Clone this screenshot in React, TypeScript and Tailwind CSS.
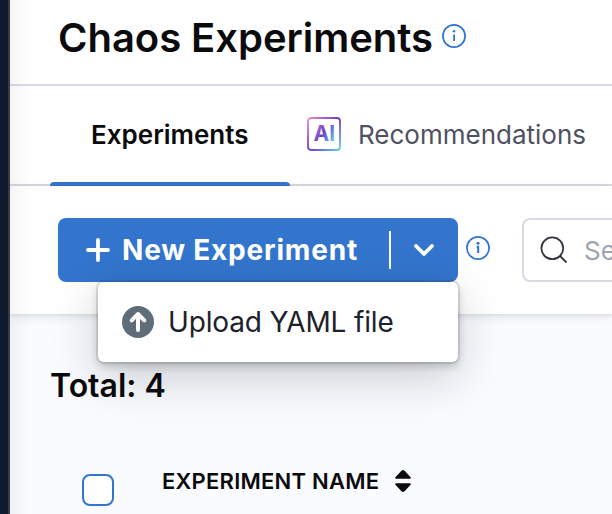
import React from "react";

function InfoIcon({ bold = false }: { bold?: boolean }) {
  return (
    <svg width="24" height="24" viewBox="0 0 24 24" fill="none" className="block shrink-0">
      <circle cx="12" cy="12" r="11.1" stroke="#2f74d0" strokeWidth="1.7" />
      <circle cx="12" cy="7.3" r={bold ? 1.5 : 1.2} fill="#2f74d0" />
      <path d={bold ? "M10.6 10.8H12.2V17" : "M11.2 11.5H12.1V17"} stroke="#2f74d0" strokeWidth={bold ? 2 : 1.8} />
    </svg>
  );
}

function AiBadge() {
  return (
    <svg width="34" height="34" viewBox="0 0 34 34" fill="none" className="block shrink-0">
      <defs>
        <linearGradient id="frame" x1="0" y1="0" x2="34" y2="34" gradientUnits="userSpaceOnUse">
          <stop offset="0.04" stopColor="#ee88c5" />
          <stop offset="0.5" stopColor="#6938d2" />
          <stop offset="0.96" stopColor="#62cde2" />
        </linearGradient>
        <linearGradient id="letters" x1="7" y1="8" x2="28" y2="21" gradientUnits="userSpaceOnUse">
          <stop offset="0" stopColor="#c273ca" />
          <stop offset="0.5" stopColor="#6840d4" />
          <stop offset="1" stopColor="#6cc6e4" />
        </linearGradient>
      </defs>
      <rect x="1" y="1" width="32" height="32" rx="3" stroke="url(#frame)" strokeWidth="1.8" />
      <text x="6.6" y="24" fill="url(#letters)" className="font-['Inter'] text-[21px] font-bold">AI</text>
    </svg>
  );
}

function SearchIcon() {
  return (
    <svg width="28" height="28" viewBox="0 0 28 28" fill="none" stroke="#383541" strokeWidth="1.8" className="block shrink-0">
      <circle cx="12.3" cy="12.3" r="10.9" />
      <path d="M20 20L26.5 26.5" />
    </svg>
  );
}

function Header() {
  return (
    <header className="flex h-[86px] shrink-0 items-start gap-[7px] border-b-2 border-[#d9dae5] pl-12">
      <h1 className="mt-[14px] w-[377px] text-[40px] leading-[48px] font-[620] tracking-[-0.04px] whitespace-nowrap">Chaos Experiments</h1>
      <div className="mt-6"><InfoIcon /></div>
    </header>
  );
}

function Tabs() {
  return (
    <nav className="flex h-[100px] shrink-0 border-b-2 border-[#d9dae5] pl-10 text-[26px] leading-8">
      <div className="flex h-[100px] w-60 flex-col justify-between">
        <span className="mt-[33px] ml-[41px] font-semibold">Experiments</span>
        <span className="h-1 rounded-t bg-[#3375cd]" />
      </div>
      <div className="mt-[31px] ml-[17px] flex h-[34px] items-start gap-[17px] text-[#4f5162]">
        <AiBadge />
        <span className="mt-0.5">Recommendations</span>
      </div>
    </nav>
  );
}

function UploadMenu() {
  return (
    <div className="absolute top-16 left-10 z-10 flex h-20 w-[360px] items-center gap-[14px] rounded-[6px] bg-white pl-6 text-[28px] text-[#1c222a] shadow-[0_0_0_2px_rgba(16,22,26,.1),0_4px_8px_rgba(16,22,26,.2),0_16px_48px_rgba(16,22,26,.2)]">
      <svg width="32" height="32" viewBox="0 0 32 32" fill="none" className="block shrink-0">
        <circle cx="16" cy="16" r="16" fill="#5f6d7a" />
        <path d="M16 24V9M9.7 14.3L16 8L22.3 14.3" stroke="white" strokeWidth="4" strokeLinecap="round" strokeLinejoin="round" />
      </svg>
      <span className="tracking-[-0.15px]">Upload YAML file</span>
    </div>
  );
}

function Toolbar() {
  return (
    <section className="relative z-10 flex h-32 shrink-0 items-start bg-white pt-8 pl-12 shadow-[0_1px_4px_rgba(40,41,61,.12),0_4px_10px_rgba(96,97,112,.10)]">
      <div className="relative shrink-0">
        <button className="flex h-16 w-[400px] items-center rounded-lg bg-[#3375cd] pl-7 text-white">
          <svg width="24" height="24" viewBox="0 0 24 24" className="shrink-0" fill="none">
            <path d="M12 2V22M2 12H22" stroke="white" strokeWidth="3.8" strokeLinecap="round" />
          </svg>
          <span className="ml-3 w-[267px] text-left text-[28px] leading-8 font-bold tracking-[0.8px]">New Experiment</span>
          <span className="h-[38px] w-0.5 bg-white" />
          <svg width="20" height="12" viewBox="0 0 20 12" fill="none" className="ml-[23px]">
            <path d="M2 2L10 10L18 2" stroke="white" strokeWidth="3.8" strokeLinecap="round" strokeLinejoin="round" />
          </svg>
        </button>
        <UploadMenu />
      </div>
      <div className="mt-[18px] ml-2"><InfoIcon bold /></div>
      <div className="ml-8 flex h-16 w-[240px] shrink-0 items-center gap-[16px] rounded-lg border-2 border-[#d9dae5] pl-4 text-[26px] text-[#9ca5b1]">
        <SearchIcon />
        <span>Search</span>
      </div>
    </section>
  );
}

function ExperimentList() {
  return (
    <main className="flex-1 pl-10">
      <h2 className="mt-[52px] text-[32px] leading-10 font-semibold">Total: 4</h2>
      <div className="mt-[61px] flex items-start pl-8">
        <span className="mt-[7px] size-8 rounded-lg border-2 border-[#3375cd] bg-white" />
        <span className="ml-12 text-[22px] leading-7 font-semibold tracking-[0.23px]">EXPERIMENT NAME</span>
        <svg width="16" height="22" viewBox="0 0 16 22" fill="#0b0b0d" stroke="#0b0b0d" strokeWidth="1.6" strokeLinejoin="round" className="mt-[3px] ml-4">
          <path d="M1 7.9L7 1.3Q8 .5 9 1.3L15 7.9ZM1 14.1L7 20.7Q8 21.5 9 20.7L15 14.1Z" />
        </svg>
      </div>
    </main>
  );
}

export default function App() {
  return (
    <div className="flex h-[514px] w-[612px] overflow-hidden bg-white font-['Inter',sans-serif] text-[#0b0b0d]">
      <aside className="w-[10px] shrink-0 border-r-2 border-[#3b3a45] bg-[#0f1a2e]" />
      <div className="relative flex min-w-0 flex-1 flex-col bg-[#fafbff]">
        <div className="flex shrink-0 flex-col bg-white">
          <Header />
          <Tabs />
        </div>
        <Toolbar />
        <ExperimentList />
        <div className="pointer-events-none absolute inset-y-0 left-0 z-20 w-5 bg-gradient-to-r from-black/4 to-transparent" />
      </div>
    </div>
  );
}
